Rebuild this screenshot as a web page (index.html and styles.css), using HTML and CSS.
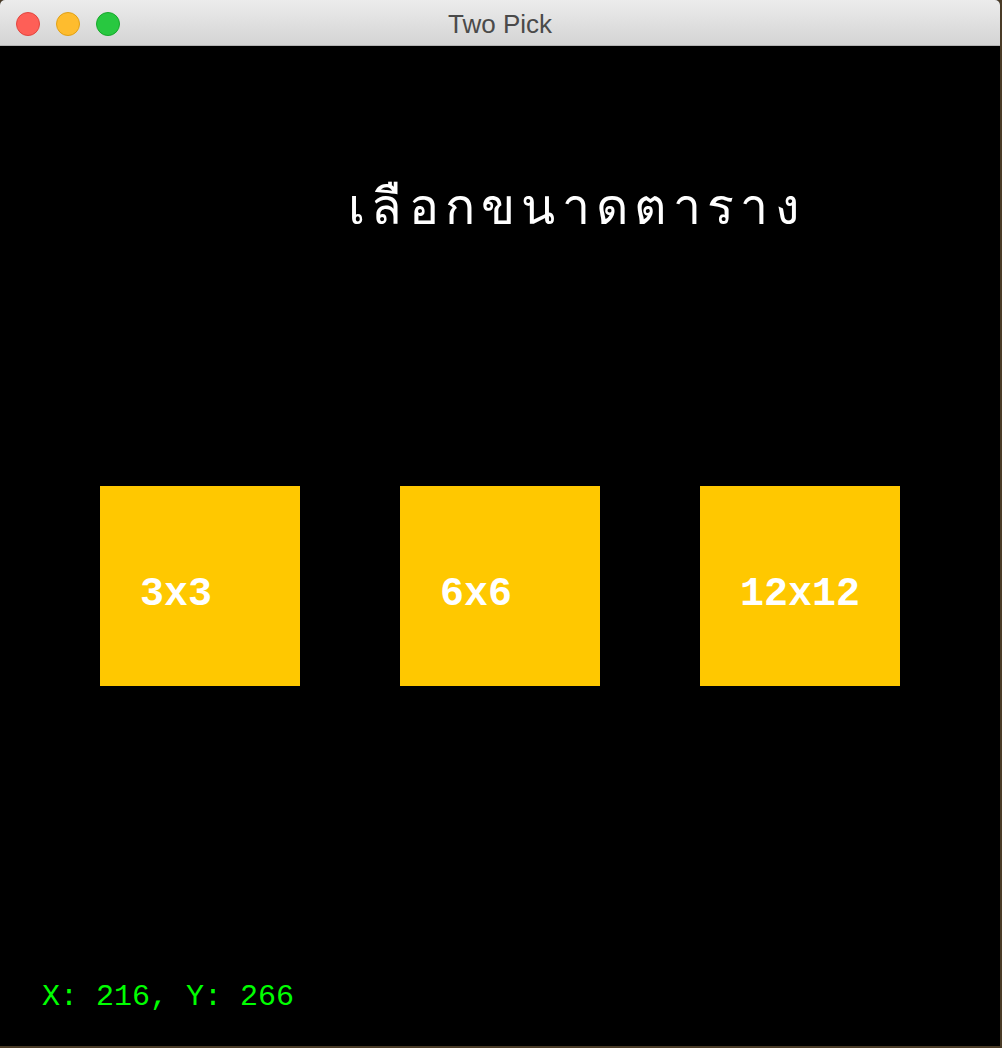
FILE: index.html
```html
<!DOCTYPE html>
<html>
<head>
<meta charset="utf-8">
<link rel="stylesheet" href="styles.css">
</head>
<body>
<div class="window">
  <div class="titlebar">
    <div class="lights">
      <span class="light red"></span>
      <span class="light yellow"></span>
      <span class="light green"></span>
    </div>
    <div class="wtitle">Two Pick</div>
  </div>
  <div class="canvas">
    <div class="heading">เลือกขนาดตาราง</div>
    <div class="choices">
      <div class="choice"><span class="label">3x3</span></div>
      <div class="choice"><span class="label">6x6</span></div>
      <div class="choice"><span class="label">12x12</span></div>
    </div>
    <div class="status">X: 216, Y: 266</div>
  </div>
</div>
</body>
</html>
```
FILE: styles.css
```css
html, body {
  margin: 0;
  padding: 0;
}
body {
  width: 1002px;
  height: 1048px;
  background: #4a3b26;
  overflow: hidden;
}
.window {
  width: 1000px;
  height: 1046px;
  border-radius: 5px 5px 0 0;
  overflow: hidden;
  display: flex;
  flex-direction: column;
  background: #000;
}
.titlebar {
  height: 45px;
  flex: none;
  position: relative;
  background: linear-gradient(#ececec, #d4d4d4);
  border-bottom: 1px solid #b4b4b4;
  display: flex;
  align-items: center;
  justify-content: center;
}
.lights {
  position: absolute;
  left: 16px;
  top: 12px;
  display: flex;
  gap: 16px;
}
.light {
  width: 24px;
  height: 24px;
  border-radius: 50%;
  box-sizing: border-box;
}
.red { background: #fe5f57; border: 1px solid #e2463f; }
.yellow { background: #febc2e; border: 1px solid #e1a116; }
.green { background: #28c840; border: 1px solid #17a82b; }
.wtitle {
  font-family: "Liberation Sans", Arial, sans-serif;
  font-size: 26px;
  color: #4a4a4a;
  margin-top: 3px;
}
.canvas {
  flex: 1;
  background: #000;
  display: flex;
  flex-direction: column;
}
.heading {
  margin: 135px 0 0 348px;
  font-family: "Liberation Mono", monospace;
  font-size: 50px;
  line-height: 60px;
  color: #fff;
  letter-spacing: 6.3px;
  white-space: nowrap;
}
.choices {
  display: flex;
  gap: 100px;
  padding-left: 100px;
  margin-top: 245px;
}
.choice {
  width: 200px;
  height: 200px;
  background: #ffc800;
  display: flex;
  align-items: center;
  padding-left: 40px;
  box-sizing: border-box;
}
.label {
  font-family: "Liberation Mono", "Courier New", monospace;
  font-weight: bold;
  font-size: 40px;
  color: #fff;
  margin-top: 16px;
}
.status {
  margin-top: auto;
  margin-bottom: 32px;
  padding-left: 42px;
  font-family: "Liberation Mono", "Courier New", monospace;
  font-size: 30px;
  color: #00ff00;
}
```
